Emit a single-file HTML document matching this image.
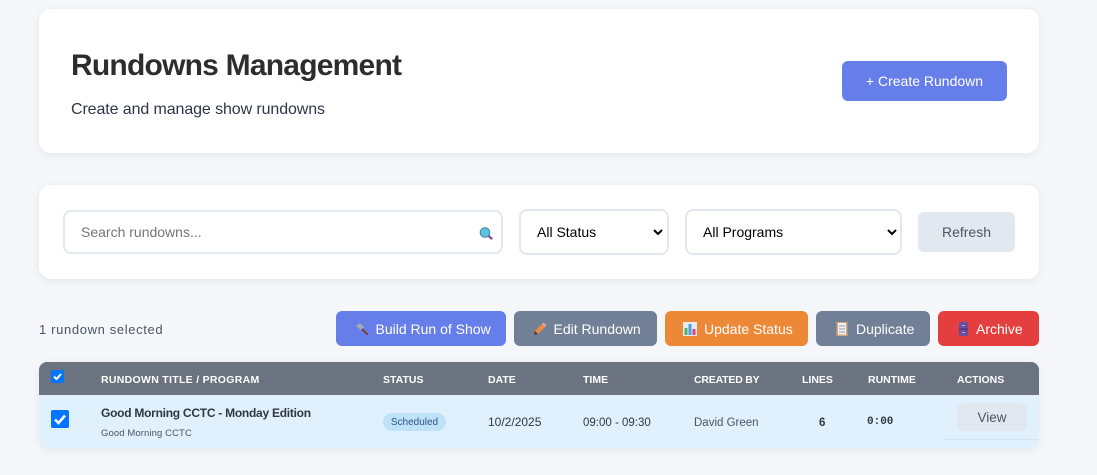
<!DOCTYPE html>
<html><head><meta charset="utf-8"><style>
html,body{margin:0;padding:0;width:1097px;height:475px;overflow:hidden;background:#f5f7fb;font-family:"Liberation Sans",sans-serif;color:#2d3748}
.a{position:absolute;white-space:nowrap}
.card{position:absolute;background:#fff;border-radius:12px;box-shadow:0 2px 10px rgba(0,0,0,.08)}
.btn{position:absolute;top:311px;height:35px;border-radius:6px;color:#fff;font-size:14px;line-height:36px;white-space:nowrap}
.btn svg{position:absolute;top:10px;left:0}
.btn span{position:absolute;top:0}
.field{position:absolute;box-sizing:border-box;background:#fff;border:2px solid #e2e8f0;border-radius:8px;font-size:14px;color:#000}
.th{position:absolute;top:374px;font-size:10.5px;font-weight:bold;color:#fff;white-space:nowrap;line-height:12px}
.td{position:absolute;font-size:11.5px;color:#2d3748;white-space:nowrap;line-height:14px}
.cb{position:absolute;background:#0075ff;border-radius:2px}
</style></head><body>
<div class="card" style="left:39px;top:9px;width:1000px;height:144px"></div>
<div class="a" style="left:71px;top:48px;font-size:30px;line-height:36px;font-weight:bold;color:#2d2d2d;letter-spacing:-.78px">Rundowns Management</div>
<div class="a" style="left:71px;top:100px;font-size:16px;line-height:20px;color:#2d3748;letter-spacing:-.1px">Create and manage show rundowns</div>
<div class="a" style="left:842px;top:61px;width:165px;height:40px;background:#667eea;border-radius:6px;color:#fff;font-size:14px;line-height:40px;text-align:center">+ Create Rundown</div>

<div class="card" style="left:39px;top:185px;width:1000px;height:94px"></div>
<div class="field" style="left:63px;top:210px;width:440px;height:44px;line-height:40px;padding-left:16px;color:#757575">Search rundowns...</div>
<svg class="a" style="left:478px;top:226px" width="16" height="14" viewBox="0 0 16 14"><path d="M9.500 9l4 3.500" stroke="#8e4f9e" stroke-width="2.400" stroke-linecap="round"/><circle cx="7" cy="6.500" r="4.800" fill="#5cc3e0" stroke="#4a7fa0" stroke-width="1"/></svg>
<div class="field" style="left:519px;top:209px;width:150px;height:46px;line-height:42px;padding-left:16px">All Status</div>
<svg class="a" style="left:653px;top:229px" width="10" height="7" viewBox="0 0 10 7"><path d="M1 1l4 4 4-4" fill="none" stroke="#000" stroke-width="2"/></svg>
<div class="field" style="left:685px;top:209px;width:217px;height:46px;line-height:42px;padding-left:16px">All Programs</div>
<svg class="a" style="left:887px;top:229px" width="10" height="7" viewBox="0 0 10 7"><path d="M1 1l4 4 4-4" fill="none" stroke="#000" stroke-width="2"/></svg>
<div class="a" style="left:918px;top:212px;width:97px;height:40px;background:#e2e8f0;border-radius:6px;color:#4a5568;font-size:14px;line-height:40px;text-align:center">Refresh</div>

<div class="a" style="left:39px;top:322px;font-size:13px;line-height:16px;color:#4a5568;letter-spacing:.64px">1 rundown selected</div>

<div class="btn" style="left:336px;width:170px;background:#667eea"><svg style="left:18px" width="16" height="16" viewBox="0 0 16 16"><path d="M7 7l6 6" stroke="#7d3f3f" stroke-width="2.200" stroke-linecap="round"/><path d="M2 5l4-3 4 4-3 3z" fill="#a8a8b8"/></svg><span style="left:39.500px">Build Run of Show</span></div>
<div class="btn" style="left:514px;width:143px;background:#718096"><svg style="left:18px" width="16" height="16" viewBox="0 0 16 16"><path d="M3 10l7-7 3 3-7 7z" fill="#f08a3c"/><path d="M10 3l1.500-1.500 3 3L13 6z" fill="#f0a0a0"/><path d="M3 10l3 3-4 1z" fill="#4a3a3a"/></svg><span style="left:39.500px">Edit Rundown</span></div>
<div class="btn" style="left:665px;width:143px;background:#ed8936"><svg style="left:17px" width="16" height="16" viewBox="0 0 16 16"><rect x="1" y="1" width="14" height="14" fill="#e8eaf0"/><rect x="2.500" y="7" width="3" height="7" fill="#4fb06a"/><rect x="6.500" y="3" width="3" height="11" fill="#4aa0dc"/><rect x="10.500" y="8" width="3" height="6" fill="#e0407a"/></svg><span style="left:39px">Update Status</span></div>
<div class="btn" style="left:816px;width:114px;background:#718096"><svg style="left:18px" width="16" height="16" viewBox="0 0 16 16"><rect x="2.500" y="1" width="11" height="14" fill="#d9a679"/><rect x="4" y="2" width="8" height="11.500" fill="#eef0f6"/><path d="M5 5h6M5 8h6M5 11h6" stroke="#9a9eb0" stroke-width="1"/></svg><span style="left:40px">Duplicate</span></div>
<div class="btn" style="left:938px;width:101px;background:#e53e3e"><svg style="left:18px" width="16" height="16" viewBox="0 0 16 16"><rect x="3" y="1" width="9" height="14" fill="#6a4fa0"/><path d="M3 8h9" stroke="#3f2f70"/><path d="M6.500 4.500h2M6.500 11.500h2" stroke="#d8d0f0"/></svg><span style="left:38px">Archive</span></div>

<div class="a" style="left:39px;top:362px;width:1000px;height:86px;border-radius:8px;background:#e1f0fd;box-shadow:0 2px 10px rgba(0,0,0,.07);overflow:hidden">
<div style="position:absolute;left:0;top:0;width:1000px;height:33px;background:#6b7280"></div>
<div style="position:absolute;left:905px;top:77px;width:95px;height:1px;background:#d5e3ee"></div>
</div>
<div class="cb" style="left:51px;top:370px;width:13px;height:13px"></div>
<svg class="a" style="left:51px;top:370px" width="13" height="13" viewBox="0 0 13 13"><path d="M3 6.500l2.500 2.500 4.500-5" fill="none" stroke="#fff" stroke-width="2"/></svg>
<div class="th" style="left:101px;letter-spacing:.3px">RUNDOWN TITLE / PROGRAM</div>
<div class="th" style="left:383px">STATUS</div>
<div class="th" style="left:488px">DATE</div>
<div class="th" style="left:583px">TIME</div>
<div class="th" style="left:694px;letter-spacing:-.2px">CREATED BY</div>
<div class="th" style="left:802px">LINES</div>
<div class="th" style="left:868px">RUNTIME</div>
<div class="th" style="left:957px">ACTIONS</div>

<div class="cb" style="left:51px;top:410px;width:18px;height:18px"></div>
<svg class="a" style="left:51px;top:410px" width="18" height="18" viewBox="0 0 18 18"><path d="M4 9.500l3.500 3.500 6.500-7.500" fill="none" stroke="#fff" stroke-width="2.600"/></svg>
<div class="td" style="left:101px;top:406px;font-size:12px;font-weight:bold;color:#2d3748;letter-spacing:-.26px">Good Morning CCTC - Monday Edition</div>
<div class="td" style="left:101px;top:427px;font-size:9.500px;color:#4a5568;letter-spacing:.1px">Good Morning CCTC</div>
<div class="a" style="left:383px;top:413px;width:63px;height:18px;border-radius:9px;background:#bee3f8;color:#2c5282;font-size:10px;line-height:20px;text-align:center">Scheduled</div>
<div class="td" style="left:488px;top:415px;font-size:12px">10/2/2025</div>
<div class="td" style="left:583px;top:416px">09:00 - 09:30</div>
<div class="td" style="left:694px;top:416px;color:#4a5568">David Green</div>
<div class="td" style="left:819px;top:416px;font-weight:bold">6</div>
<div class="td" style="left:867px;top:415px;font-family:'Liberation Mono',monospace;font-weight:bold;font-size:11px">0:00</div>
<div class="a" style="left:957px;top:403px;width:70px;height:28px;border-radius:6px;background:#e2e8f0;color:#4a5568;font-size:13.500px;line-height:29px;text-align:center">View</div>
</body></html>
